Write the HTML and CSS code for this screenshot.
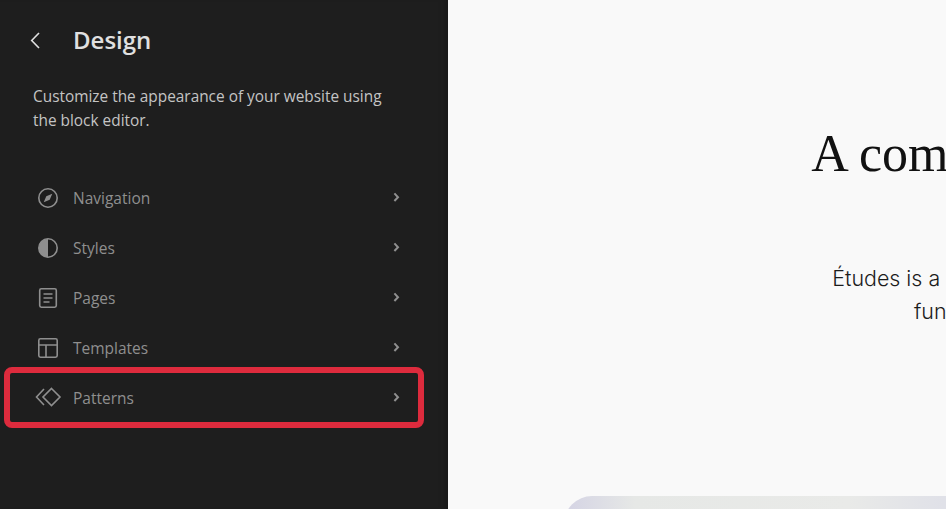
FILE: index.html
```html
<!DOCTYPE html>
<html>
<head>
    <title>Design</title>
    <link rel="stylesheet" href="styles.css">
</head>
<body>
    <div class="layout">
        <aside class="sidebar">
            <div class="sidebar-head">
                <svg class="back-icon" width="24" height="24" viewBox="0 0 24 24"><path d="M15 5l-7.3 7.500 7.300 7.500" /></svg>
                <h1>Design</h1>
            </div>
            <p class="intro">Customize the appearance of your website using the block editor.</p>
            <nav class="menu">
                <a class="menu-row">
                    <svg class="menu-icon" width="24" height="24" viewBox="0 0 24 24"><circle cx="12" cy="12" r="9.2" /><path class="solid" d="M16.3 7.7l-2.6 6-3.4-3.4zM7.7 16.3l2.6-6 3.4 3.4z" /></svg>
                    <span class="menu-label">Navigation</span>
                    <svg class="chevron" width="24" height="24" viewBox="0 0 24 24"><path d="M10.400 7.400l3.600 3.800-3.600 3.800" /></svg>
                </a>
                <a class="menu-row">
                    <svg class="menu-icon" width="24" height="24" viewBox="0 0 24 24"><circle cx="12" cy="12" r="9.2" /><path class="solid" d="M12 2.8a9.2 9.2 0 0 0 0 18.4z" /></svg>
                    <span class="menu-label">Styles</span>
                    <svg class="chevron" width="24" height="24" viewBox="0 0 24 24"><path d="M10.400 7.400l3.600 3.800-3.600 3.800" /></svg>
                </a>
                <a class="menu-row">
                    <svg class="menu-icon" width="24" height="24" viewBox="0 0 24 24"><rect x="3.7" y="2.8" width="16.6" height="18.4" rx="1.6" /><path d="M7.5 8h9M7.5 12h9M7.5 16h6" /></svg>
                    <span class="menu-label">Pages</span>
                    <svg class="chevron" width="24" height="24" viewBox="0 0 24 24"><path d="M10.400 7.400l3.600 3.800-3.600 3.800" /></svg>
                </a>
                <a class="menu-row">
                    <svg class="menu-icon" width="24" height="24" viewBox="0 0 24 24"><rect x="2.8" y="2.8" width="18.4" height="18.4" rx="1.6" /><path d="M2.8 9h18.4M10 9v12.2" /></svg>
                    <span class="menu-label">Templates</span>
                    <svg class="chevron" width="24" height="24" viewBox="0 0 24 24"><path d="M10.400 7.400l3.600 3.800-3.600 3.800" /></svg>
                </a>
                <a class="menu-row is-marked">
                    <svg class="menu-icon" width="24" height="24" viewBox="0 0 24 24"><path d="M8 3l-7.500 8L8 19M15.500 2.500L24 11l-8.500 8.500L7 11z" /></svg>
                    <span class="menu-label">Patterns</span>
                    <svg class="chevron" width="24" height="24" viewBox="0 0 24 24"><path d="M10.400 7.400l3.600 3.800-3.600 3.800" /></svg>
                    <span class="marker"></span>
                </a>
            </nav>
        </aside>
        <main class="preview">
            <div class="preview-page">
                <h2>A commitment to innovation and sustainability</h2>
                <p>Études is a pioneering firm that seamlessly merges creativity and functionality to redefine architectural excellence.</p>
                <div class="hero"></div>
            </div>
        </main>
    </div>
</body>
</html>
```

FILE: styles.css
```css
* {
    box-sizing: border-box;
}

html, body {
    height: 100%;
}

body {
    margin: 0;
    overflow: hidden;
    font-family: "Open Sans", sans-serif;
    background-color: #f9f9f9;
}

.layout {
    display: flex;
    height: 100%;
}

.sidebar {
    flex: 0 0 448px;
    padding: 28px 32px 0 24px;
    background-color: #1e1e1e;
    box-shadow: inset -8px 0 8px -8px #151515;
}

.sidebar-head {
    display: flex;
    align-items: center;
    gap: 25px;
}

.sidebar-head h1 {
    margin: 0;
    font-size: 24px;
    line-height: 24px;
    font-weight: 600;
    color: #e0e0e0;
}

.back-icon path {
    fill: none;
    stroke: #e0e0e0;
    stroke-width: 1.6;
}

.intro {
    max-width: 360px;
    margin: 33px 0 0 9px;
    font-size: 15.4px;
    line-height: 24px;
    color: #c4c4c4;
}

.menu {
    margin-top: 40px;
}

.menu-row {
    position: relative;
    display: flex;
    align-items: center;
    height: 50px;
    padding: 0 8px 0 12px;
    color: #8f8f8f;
}

.menu-label {
    flex: 1;
    margin-left: 13px;
    font-size: 15.5px;
}

.menu-icon {
    overflow: visible;
}

.menu-icon circle, .menu-icon rect, .menu-icon path {
    fill: none;
    stroke: #8f8f8f;
    stroke-width: 1.6;
}

.menu-icon .solid {
    fill: #8f8f8f;
    stroke: none;
}

.chevron path {
    fill: none;
    stroke: #8f8f8f;
    stroke-width: 2;
}

.marker {
    position: absolute;
    top: -6px;
    right: -8px;
    bottom: -5px;
    left: -20px;
    border: 6px solid #dd2b3d;
    border-radius: 8px;
}

.preview {
    flex: 1;
    overflow: hidden;
}

.preview-page {
    width: 1298px;
    padding: 125px 0 0 116px;
    text-align: center;
}

.preview-page h2 {
    max-width: 800px;
    margin: 0 auto;
    font-family: "Liberation Serif", serif;
    font-size: 52px;
    line-height: 58px;
    font-weight: 400;
    color: #111111;
}

.preview-page p {
    max-width: 720px;
    margin: 21px auto 0;
    font-family: Inter, sans-serif;
    font-size: 21.4px;
    line-height: 33px;
    font-weight: 300;
    color: #1c1c1c;
}

.hero {
    height: 400px;
    margin-top: 168px;
    border-radius: 28px;
    background: linear-gradient(90deg, #d4d3e4 0, #e6e8e6 6%, #e9eae8 24%, #e0e1e8 32%, #dfe0e8 50%, #fbfcfa 62%, #f4f6f2 68%, #e8eae8 78%, #d5dbe8 100%);
}
```
